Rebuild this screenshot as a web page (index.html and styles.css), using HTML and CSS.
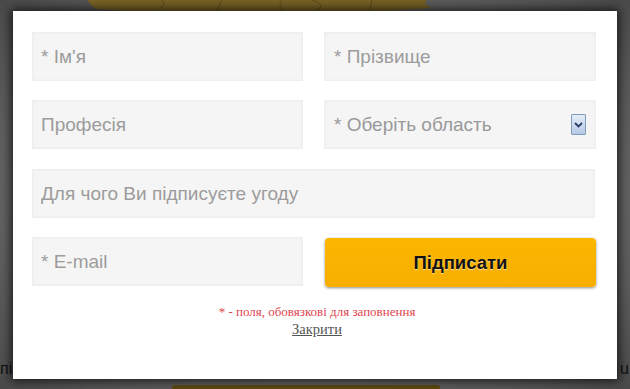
FILE: index.html
```html
<!DOCTYPE html>
<html lang="uk">
<head>
    <meta charset="UTF-8">
    <meta name="viewport" content="width=device-width, initial-scale=1.0">
    <title>Підписати угоду</title>
    <link rel="stylesheet" href="styles.css">
</head>
<body>
    <div class="page">
        <svg class="map" width="345" height="12" viewBox="0 0 345 12">
            <path d="M0 0 L340 0 L338 4 L344 8 L330 9 L300 11 L260 12 L200 11 L120 12 L40 11 L8 9 Z" fill="#7a6326"/>
            <path d="M75 0 Q80 5 72 9 M135 0 L130 11 M195 0 Q190 6 197 11 M225 0 Q240 5 230 10 M285 0 L283 10" stroke="#5f4c1a" stroke-width="1" fill="none"/>
        </svg>
        <span class="side left">пі</span>
        <span class="side right">u</span>
        <div class="back-btn"></div>
    </div>

    <div class="modal">
        <form class="form">
            <div class="row">
                <input class="field" type="text" placeholder="* Ім'я">
                <input class="field" type="text" placeholder="* Прізвище">
            </div>
            <div class="row">
                <input class="field" type="text" placeholder="Професія">
                <div class="field select">
                    <span>* Оберіть область</span>
                    <span class="arrow">
                        <svg width="9" height="6" viewBox="0 0 9 6"><path d="M1 1 L4.5 4.5 L8 1" stroke="#2a3f66" stroke-width="1.8" fill="none"/></svg>
                    </span>
                </div>
            </div>
            <div class="row mid">
                <input class="field wide" type="text" placeholder="Для чого Ви підписуєте угоду">
            </div>
            <div class="row">
                <input class="field" type="text" placeholder="* E-mail">
                <button class="submit" type="button">Підписати</button>
            </div>
        </form>
        <p class="note">* - поля, обовязкові для заповнення</p>
        <a class="close" href="#">Закрити</a>
    </div>
</body>
</html>
```

FILE: styles.css
```css
* {
    box-sizing: border-box;
}
html, body {
    margin: 0;
    height: 100%;
}
body {
    background: #626262;
    font-family: "Liberation Sans", Arial, sans-serif;
    overflow: hidden;
}
.page {
    height: 100%;
    background: radial-gradient(ellipse at center, #8a8a8a 0%, #6a6a6a 60%, #4a4a4a 100%);
}
.map {
    position: absolute;
    left: 87px;
    top: 0;
}
.side {
    position: absolute;
    top: 360px;
    font-size: 16px;
    color: #111;
}
.side.left {
    left: 0;
}
.side.right {
    left: 620px;
}
.back-btn {
    position: absolute;
    left: 172px;
    top: 385px;
    width: 268px;
    height: 10px;
    background: #5e4a10;
    border-radius: 3px;
}

.modal {
    position: absolute;
    left: 13px;
    top: 11px;
    width: 604px;
    height: 368px;
    background: #fff;
    box-shadow: 0 0 10px 2px rgba(0, 0, 0, 0.75);
    padding: 21px 21px 0 19px;
    text-align: center;
}
.form {
    display: flex;
    flex-direction: column;
    gap: 19px;
}
.row {
    display: flex;
    gap: 21px;
}
.row.mid {
    margin-top: 1px;
}
.field {
    flex: 0 0 271px;
    width: 271px;
    height: 49px;
    margin: 0;
    border: 1px solid #eeeeee;
    background: #f5f5f5;
    box-shadow: inset 0 0 3px rgba(0, 0, 0, 0.04);
    padding: 0 8px;
    font-family: "Liberation Sans", Arial, sans-serif;
    font-size: 19px;
    color: #999;
    text-align: left;
    outline: none;
}
.row .field + .field {
    flex: 1 1 auto;
    padding-left: 9px;
}
.field.wide {
    flex: 1 1 auto;
    margin-right: 1px;
}
.field::placeholder {
    color: #9c9c9c;
}
.select {
    display: flex;
    align-items: center;
    justify-content: space-between;
    padding-right: 9px;
}
.row .select {
    padding-left: 12px;
}
.arrow {
    width: 15px;
    height: 21px;
    border: 1px solid #7f9db9;
    background: linear-gradient(#e4ecf8, #b7c9e6);
    display: flex;
    align-items: center;
    justify-content: center;
    border-radius: 1px;
}
.submit {
    flex: 1 1 auto;
    height: 49px;
    margin: 1px 0 0 1px;
    border: none;
    border-radius: 4px;
    background: linear-gradient(#fbb700, #f7ae00);
    box-shadow: 0 1px 3px rgba(0, 0, 0, 0.45);
    font-family: "Liberation Sans", Arial, sans-serif;
    font-weight: bold;
    font-size: 18.5px;
    color: #111;
    text-shadow: 0 1px 1px rgba(255, 255, 255, 0.6);
}
.note {
    margin: 17px 0 0 6px;
    font-family: "Liberation Serif", "Times New Roman", serif;
    font-size: 13px;
    color: #e0454f;
}
.close {
    display: inline-block;
    margin: 0 0 0 6px;
    font-family: "Liberation Serif", "Times New Roman", serif;
    font-size: 14.5px;
    color: #555;
}
```
